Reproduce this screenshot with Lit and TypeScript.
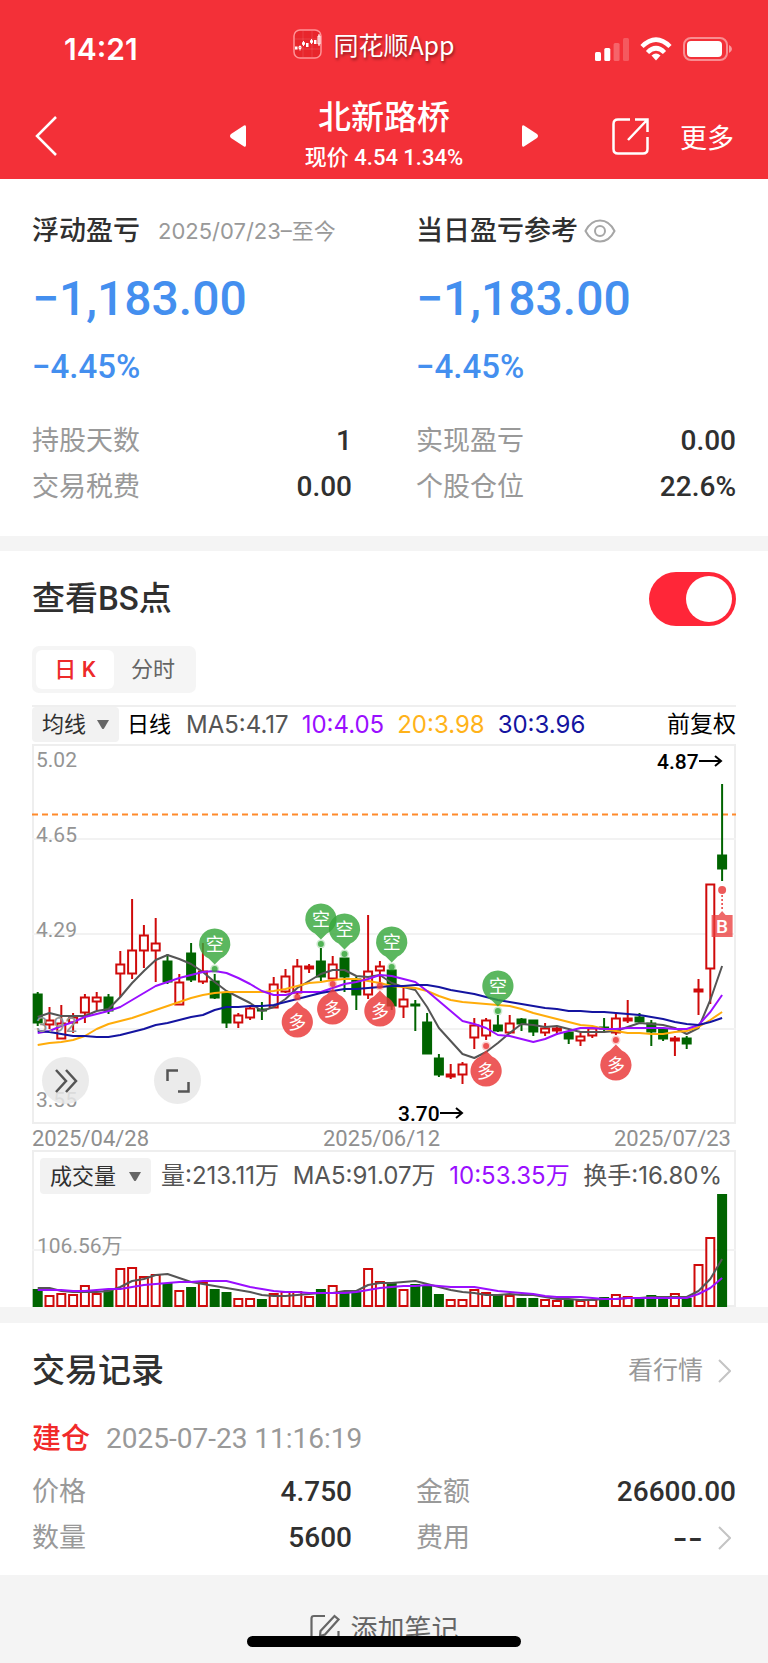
import { LitElement, html, svg, css } from "lit";
import { customElement, property, state } from "lit/decorators.js";

const STEP = 11.8;
const FIRST = 5.7;
const cx = (i: number) => FIRST + STEP * i;
const line = (ys: number[]) => ys.map((y, i) => `${cx(i).toFixed(1)},${y}`).join(" ");

/* direction, high, body top, body bottom, low, volume top */
type Bar = ["r" | "g", number, number, number, number, number];

const BARS: Bar[] = [
  ["g", 248, 250, 279, 282, 139], ["r", 263, 276, 281, 285, 145], ["r", 261, 279, 295, 295, 143],
  ["r", 269, 273, 279, 289, 144], ["r", 250, 253, 269, 279, 135], ["r", 248, 253, 258, 266, 143],
  ["g", 250, 253, 267, 270, 140], ["r", 207, 220, 230, 253, 118], ["r", 155, 206, 230, 235, 117],
  ["r", 181, 191, 207, 224, 126], ["r", 174, 199, 207, 238, 124], ["g", 210, 217, 238, 240, 133],
  ["r", 230, 238, 261, 261, 140], ["g", 199, 209, 236, 238, 137], ["r", 199, 227, 238, 240, 132],
  ["g", 230, 237, 254, 255, 139], ["g", 248, 249, 279, 284, 142], ["r", 269, 271, 279, 284, 148],
  ["r", 262, 264, 274, 276, 148], ["g", 258, 265, 267, 276, 149], ["r", 233, 240, 264, 264, 143],
  ["r", 225, 232, 248, 249, 141], ["r", 215, 222, 249, 251, 141], ["r", 220, 222, 225, 229, 146],
  ["g", 204, 217, 233, 237, 139], ["r", 212, 220, 235, 236, 135], ["g", 214, 214, 233, 248, 141],
  ["g", 233, 235, 251, 266, 141], ["r", 171, 227, 251, 255, 118], ["r", 217, 222, 227, 239, 131],
  ["g", 226, 226, 262, 266, 132], ["r", 243, 255, 263, 274, 139], ["g", 256, 260, 262, 287, 134],
  ["g", 269, 278, 310, 310, 135], ["g", 310, 314, 331, 333, 144], ["r", 320, 330, 333, 335, 149],
  ["r", 318, 320, 331, 340, 149], ["r", 274, 281, 294, 305, 139], ["r", 274, 276, 292, 296, 142],
  ["g", 271, 281, 287, 288, 145], ["r", 271, 279, 289, 290, 145], ["g", 274, 275, 280, 287, 148],
  ["g", 276, 276, 288, 292, 148], ["r", 279, 284, 289, 292, 149], ["r", 282, 284, 287, 291, 150],
  ["g", 288, 288, 295, 300, 149], ["r", 289, 292, 297, 302, 150], ["r", 284, 284, 292, 294, 149],
  ["g", 274, 283, 285, 287, 147], ["r", 269, 274, 289, 291, 144], ["r", 256, 274, 277, 279, 146],
  ["g", 269, 273, 278, 280, 148], ["g", 276, 279, 288, 302, 145], ["g", 285, 285, 295, 297, 148],
  ["r", 292, 294, 297, 312, 143], ["g", 292, 294, 300, 305, 148], ["r", 235, 245, 248, 271, 114],
  ["r", 140, 140, 225, 260, 87], ["g", 40, 111, 125, 137, 44],
];

const MA5 = [273, 269, 272, 272, 272, 267, 265, 253, 239, 227, 216, 211, 215, 220, 228, 238, 247, 253, 259, 267,
  263, 255, 244, 237, 230, 226, 226, 232, 233, 231, 239, 243, 246, 263, 284, 297, 310, 314, 308, 299,
  289, 280, 281, 283, 282, 285, 288, 288, 288, 287, 283, 279, 280, 281, 284, 290, 284, 256, 222];
const MA10 = [289, 287, 282, 278, 273, 270, 267, 263, 256, 249, 242, 238, 234, 231, 228, 227, 229, 234, 240, 247,
  251, 251, 248, 248, 248, 244, 240, 238, 235, 231, 232, 235, 238, 247, 257, 267, 277, 280, 284, 291,
  292, 295, 298, 295, 290, 287, 284, 284, 285, 285, 284, 284, 284, 284, 285, 285, 281, 268, 251];
const MA20 = [301, 299, 298, 296, 292, 285, 280, 277, 274, 270, 266, 262, 258, 254, 251, 249, 248, 248, 248, 248,
  247, 245, 242, 239, 238, 236, 235, 235, 237, 239, 242, 243, 244, 247, 252, 256, 258, 259, 260, 261,
  262, 265, 269, 272, 275, 278, 281, 282, 285, 287, 289, 289, 290, 290, 288, 287, 283, 276, 268];
const MA30 = [287, 288, 290, 292, 292, 293, 293, 291, 288, 285, 281, 279, 276, 273, 271, 266, 263, 263, 262, 262,
  261, 258, 255, 252, 249, 247, 245, 245, 244, 243, 242, 242, 241, 241, 243, 246, 248, 250, 253, 256,
  258, 260, 262, 264, 265, 267, 267, 268, 268, 269, 270, 271, 273, 275, 278, 280, 281, 278, 274];
const VOL5 = [138, 138, 141, 142, 142, 142, 141, 137, 131, 129, 125, 124, 128, 132, 134, 136, 138, 140, 142, 145,
  146, 146, 145, 144, 143, 143, 141, 141, 135, 133, 133, 132, 131, 134, 137, 140, 142, 143, 145, 145,
  144, 145, 145, 147, 149, 149, 150, 150, 149, 149, 148, 148, 147, 147, 147, 147, 141, 129, 109];
const VOL10 = [140, 140, 140, 141, 141, 140, 139, 139, 137, 135, 134, 133, 132, 132, 131, 131, 131, 134, 137, 139,
  141, 142, 142, 143, 143, 143, 143, 142, 140, 138, 137, 136, 136, 135, 136, 137, 137, 137, 139, 141,
  142, 143, 144, 146, 147, 147, 147, 148, 149, 149, 148, 148, 148, 148, 148, 148, 144, 138, 128];

const SHORTS: [number, number][] = [[15, 200], [24, 175], [26, 185], [30, 198], [39, 242]];
const LONGS: [number, number][] = [[22, 278], [25, 265], [29, 267], [38, 327], [49, 321]];

const chartStyles = css`
  :host { display: block; }
  svg { display: block; width: 100%; height: auto; overflow: visible; }
  text { font-family: Roboto, "Noto Sans CJK SC", sans-serif; }
  .grid { stroke: #f2f2f2; stroke-width: 2; }
  .rise { fill: #fff; stroke: #cf0a0a; stroke-width: 2; }
  .fall { fill: #006400; stroke: #006400; stroke-width: 2; }
  .ma { fill: none; stroke-width: 2; stroke-linejoin: round; }
  .ma5 { stroke: #555; }
  .ma10 { stroke: #9a0fff; }
  .ma20 { stroke: #ffac0a; }
  .ma30 { stroke: #1414a0; }
  .scale { fill: #949494; font-size: 21px; }
`;

@customElement("price-chart")
class PriceChart extends LitElement {
  static styles = [chartStyles, css`
    .cost { stroke: #ff8a2b; stroke-width: 2; stroke-dasharray: 6 4; }
    .peak { fill: #000; font-size: 21px; font-weight: 500; }
    .arrow { fill: none; stroke: #000; stroke-width: 2; }
    .short { fill: #37a73c; fill-opacity: 0.82; }
    .long { fill: #ea3a3a; fill-opacity: 0.84; }
    .halo { fill-opacity: 0.25; }
    .tag { fill: #fff; font-size: 18px; text-anchor: middle; }
    .buy { fill: #ea3a3a; fill-opacity: 0.76; }
    .stem { stroke: #ea3a3a; stroke-width: 1.5; stroke-dasharray: 2 2; }
    .mark { fill: #fff; font-size: 19px; font-weight: 500; text-anchor: middle; }
  `];

  private pin(i: number, y: number, kind: "short" | "long") {
    const x = cx(i);
    const d = kind === "short" ? 1 : -1;
    return svg`
      <path class=${kind} d="M${x - 6} ${y + d * 14.4}A15.6 15.6 0 1 ${d > 0 ? 1 : 0} ${x + 6} ${y + d * 14.4}L${x} ${y + d * 20.5}Z"/>
      <circle class="${kind} halo" cx=${x} cy=${y + d * 25} r="4.5"/>
      <circle class=${kind} cx=${x} cy=${y + d * 25} r="3"/>
      <text class="tag" x=${x} y=${y + 7}>${d > 0 ? "空" : "多"}</text>`;
  }

  render() {
    const last = cx(BARS.length - 1);
    return html`<svg viewBox="0 0 704 380" role="img" aria-label="日K线">
      ${[95, 190, 285].map((y) => svg`<line class="grid" x1="0" x2="704" y1=${y} y2=${y}/>`)}
      <line class="cost" x1="0" x2="704" y1="70.5" y2="70.5"/>
      ${BARS.map(([dir, hi, top, bottom, lo], i) => svg`
        <g class=${dir === "r" ? "rise" : "fall"}>
          <line x1=${cx(i)} x2=${cx(i)} y1=${hi} y2=${lo}/>
          <rect x=${cx(i) - 4} y=${top + 0.5} width="8" height=${Math.max(bottom - top - 1, 1)}/>
        </g>`)}
      <polyline class="ma ma5" points=${line(MA5)}/>
      <polyline class="ma ma20" points=${line(MA20)}/>
      <polyline class="ma ma10" points=${line(MA10)}/>
      <polyline class="ma ma30" points=${line(MA30)}/>
      ${[["5.02", 23], ["4.65", 98], ["4.29", 193], ["3.92", 288], ["3.55", 363]].map(
        ([t, y]) => svg`<text class="scale" x="4" y=${y}>${t}</text>`)}
      ${SHORTS.map(([i, y]) => this.pin(i, y, "short"))}
      ${LONGS.map(([i, y]) => this.pin(i, y, "long"))}
      <circle class="long" cx=${last} cy="146" r="4"/>
      <line class="stem" x1=${last} x2=${last} y1="151" y2="165"/>
      <path class="buy" d="M${last - 10.5} 171h7l3.500-4 3.500 4h7v22h-21z"/>
      <text class="mark" x=${last} y="189">B</text>
      <text class="peak" x="625" y="25">4.87</text>
      <path class="arrow" d="M667 17h21M683 12l6 5-6 5"/>
      <text class="peak" x="366" y="377">3.70</text>
      <path class="arrow" d="M408 369h21M424 364l6 5-6 5"/>
    </svg>`;
  }
}

@customElement("volume-chart")
class VolumeChart extends LitElement {
  static styles = chartStyles;

  render() {
    return html`<svg viewBox="0 44 704 113" role="img" aria-label="成交量">
      <line class="grid" x1="0" x2="704" y1="100" y2="100"/>
      ${BARS.map(([dir, , , , , v], i) => svg`
        <rect class=${dir === "r" ? "rise" : "fall"} x=${cx(i) - 4} y=${v + 1} width="8" height=${155 - v}/>`)}
      <polyline class="ma ma5" points=${line(VOL5)}/>
      <polyline class="ma ma10" points=${line(VOL10)}/>
      <text class="scale" x="5" y="103">106.56万</text>
    </svg>`;
  }
}

@customElement("profit-panel")
class ProfitPanel extends LitElement {
  @property() heading = "";
  @property() range = "";
  @property() amount = "";
  @property() rate = "";
  @property({ attribute: false }) rows: [string, string][] = [];

  static styles = css`
    :host { display: block; min-width: 0; }
    .head { display: flex; align-items: center; height: 44px; white-space: nowrap; }
    h2 { margin: 0; font-size: 27px; line-height: 44px; font-weight: 500; color: #303030; }
    .range { margin-left: 18px; font-family: Inter, "Noto Sans CJK SC", sans-serif; font-size: 22px; line-height: 40px; color: #999; }
    .eye { display: flex; margin-left: 6px; padding: 0; border: 0; background: none; }
    .amount { margin: 16px 0 0; font-size: 48px; line-height: 60px; font-weight: 500; color: #448fef; }
    .rate { margin: 14px 0 0; font-size: 33px; line-height: 48px; font-weight: 500; color: #448fef; }
    dl { margin: 27px 0 0; }
    .row { display: flex; justify-content: space-between; line-height: 46px; }
    dt { font-size: 27px; color: #999; }
    dd { margin: 0; font-size: 28px; font-weight: 500; color: #303030; }
  `;

  render() {
    return html`
      <div class="head">
        <h2>${this.heading}</h2>
        ${this.range
          ? html`<span class="range">${this.range}</span>`
          : html`<button class="eye" aria-label="显示或隐藏金额">
              <svg width="32" height="24" viewBox="0 0 32 24" fill="none" stroke="#a6a6a6" stroke-width="2">
                <path d="M1.500 12C5 5 10 1.500 16 1.500S27 5 30.500 12C27 19 22 22.500 16 22.500S5 19 1.500 12z"/>
                <circle cx="16" cy="12" r="5"/>
              </svg>
            </button>`}
      </div>
      <p class="amount">${this.amount}</p>
      <p class="rate">${this.rate}</p>
      <dl>${this.rows.map(([k, v]) => html`<div class="row"><dt>${k}</dt><dd>${v}</dd></div>`)}</dl>
    `;
  }
}

@customElement("app-root")
class AppRoot extends LitElement {
  @state() private showPoints = true;
  @state() private mode = "day";

  static styles = css`
    :host {
      display: block;
      min-height: 100vh;
      background: #f4f4f4;
      color: #303030;
      font-family: Roboto, "Noto Sans CJK SC", sans-serif;
    }
    button, select { font: inherit; color: inherit; border: 0; padding: 0; margin: 0; background: none; cursor: pointer; }
    svg { display: block; }
    a { color: inherit; text-decoration: none; }
    h1, h2, p, dl, dd { margin: 0; }

    header { background: #f33038; color: #fff; padding-bottom: 3px; }
    .status { display: grid; grid-template-columns: 1fr auto 1fr; align-items: center; height: 96px; padding: 0 36px 0 16px; }
    .time { padding: 2px 0 0 48px; font-family: Inter, sans-serif; font-size: 30px; font-weight: 600; }
    .brand { display: flex; align-items: center; gap: 11px; height: 36px; padding-bottom: 8px; font: 25px/36px "Noto Sans CJK SC", sans-serif; text-shadow: 1px 2px 3px rgba(0, 0, 0, 0.45); }
    .signals { display: flex; justify-content: flex-end; align-items: center; gap: 11px; padding-top: 2px; }
    .nav { display: grid; grid-template-columns: 1fr auto 1fr; align-items: center; padding: 0 34px; }
    .stock { display: flex; align-items: center; justify-content: space-between; width: 308px; }
    .name { text-align: center; }
    .name h1 { font-size: 33px; line-height: 44px; font-weight: 500; }
    .name p { font-size: 22px; line-height: 36px; font-weight: 500; }
    .tools { display: flex; justify-content: flex-end; align-items: center; gap: 31px; font-size: 27px; }

    section { background: #fff; padding: 0 32px; }
    .summary { display: grid; grid-template-columns: 1fr 1fr; gap: 64px; padding-top: 30px; padding-bottom: 26px; }

    .points { margin-top: 15px; padding-top: 21px; }
    .between { display: flex; align-items: center; justify-content: space-between; }
    h2 { font-size: 33px; line-height: 44px; font-weight: 500; }
    .switch { appearance: none; flex: none; display: flex; width: 87px; height: 54px; margin: 0; padding: 4px; box-sizing: border-box; border-radius: 27px; background: #ccc; cursor: pointer; }
    .switch::before { content: ""; width: 46px; height: 46px; border-radius: 50%; background: #fff; }
    .switch:checked { background: #ff2638; justify-content: flex-end; }
    .tabs { display: inline-flex; margin-top: 20px; padding: 4px; border-radius: 7px; background: #f5f5f5; font-size: 22px; line-height: 39px; color: #666; vertical-align: top; }
    .tabs button { width: 78px; border-radius: 6px; }
    .tabs .on { background: #fff; color: #ed2a2a; font-weight: 500; }

    .averages { display: flex; align-items: center; margin-top: 12px; padding-bottom: 2px; border-top: 2px solid #efefef; font-size: 22px; line-height: 35px; white-space: nowrap; }
    .pick { display: grid; align-items: center; border-radius: 4px; background: #f2f2f2; }
    .pick select, .pick svg { grid-area: 1 / 1; }
    .pick select { appearance: none; height: 35px; padding: 0 32px 0 10px; font-size: 22px; }
    .pick svg { justify-self: end; margin-right: 10px; pointer-events: none; }
    .period { margin: 0 15px 0 8px; color: #000; }
    .values { display: flex; flex: 1; gap: 13px; font-family: Inter, "Noto Sans CJK SC", sans-serif; font-size: 24px; color: #555; }
    .purple { color: #9a0fff; }
    .amber { color: #ffb31a; }
    .navy { color: #1414a0; }
    .adjust { font-size: 23px; color: #000; }

    .frame { position: relative; box-shadow: inset 0 0 0 2px #eee; }
    .floating { position: absolute; left: 10px; bottom: 20px; display: flex; gap: 65px; }
    .floating button { display: grid; place-items: center; width: 47px; height: 47px; border-radius: 50%; background: rgba(232, 232, 232, 0.85); }
    .dates { display: flex; justify-content: space-between; padding: 4px 5px 0 0; font-size: 22px; line-height: 22px; color: #8f8f8f; }
    .turnover { display: flex; align-items: center; padding: 8px 14px 0 8px; white-space: nowrap; }
    .turnover .pick select { height: 36px; padding-right: 34px; }
    .turnover .values { justify-content: space-between; gap: 0; margin-left: 10px; line-height: 36px; }

    .trades { margin-top: 16px; padding-top: 26px; padding-bottom: 14px; }
    .more { display: flex; align-items: center; gap: 15px; padding-right: 5px; font-size: 25px; line-height: 40px; color: #999; }
    .event { display: flex; align-items: center; gap: 16px; margin: 24px 0 8px; line-height: 44px; }
    .open { font-size: 29px; font-weight: 500; color: #f12a2a; }
    .event time { font-size: 28px; color: #999; }
    .facts { display: grid; grid-template-columns: 1fr 1fr; column-gap: 64px; line-height: 46px; }
    .facts dt { font-size: 27px; color: #999; }
    .facts dd { display: flex; align-items: center; gap: 15px; font-size: 28px; font-weight: 500; }
    .facts .fee { padding-right: 5px; font-family: Inter, sans-serif; font-size: 33px; }

    footer { display: flex; justify-content: center; padding: 35px 0 13px; color: #666; }
    .note { display: flex; align-items: center; gap: 11px; font-size: 27px; line-height: 40px; }
    .home { position: fixed; bottom: 16px; left: 50%; width: 274px; height: 11px; margin-left: -137px; border-radius: 6px; background: #000; }
  `;

  private caret() {
    return html`<svg width="12" height="9" viewBox="0 0 12 9" fill="#666" aria-hidden="true"><path d="M0 0h12L7 8.500q-1 1-2 0z"/></svg>`;
  }

  private chevron() {
    return html`<svg width="13" height="24" viewBox="0 0 13 24" fill="none" stroke="#c4c4c4" stroke-width="2" aria-hidden="true"><path d="M1 1l11 11L1 23"/></svg>`;
  }

  render() {
    return html`
      <header>
        <div class="status">
          <span class="time">14:21</span>
          <span class="brand">
            <svg width="29" height="30" viewBox="0 0 29 30" fill="none" stroke="#fff">
              <rect x="1" y="1" width="27" height="28" rx="6" fill="#e8262c" stroke="#ff9396" stroke-width="1.500"/>
              <path stroke-opacity=".12" d="M2 10h25M2 20h25M10 2v26M19 2v26"/>
              <path fill="#fff" stroke="none" d="M2 17.500h2.500v3H2zM13 14h2.500v4H13zM21 11h2.500v4H21z"/>
              <path d="M7 16.500v5M6 17.500h2v2H6zM10.500 12v5M9.500 13.500h2v2h-2zM18.500 10v5M17.500 11.500h2v2h-2zM26 5v12M25 7h2v8h-2z"/>
            </svg>
            同花顺App
          </span>
          <span class="signals">
            <svg width="34" height="23" viewBox="0 0 34 23" fill="#fff" aria-label="信号">
              <rect y="14" width="6" height="9" rx="1.500"/>
              <rect x="9.300" y="10" width="6" height="13" rx="1.500"/>
              <rect x="18.600" y="5" width="6" height="18" rx="1.500" opacity=".25"/>
              <rect x="28" width="6" height="23" rx="1.500" opacity=".2"/>
            </svg>
            <svg width="32" height="24" viewBox="0 0 32 24" fill="none" stroke="#fff" stroke-width="4.500" aria-label="无线网络">
              <path d="M2 9.500Q16-4.500 30 9.500M7.500 15.500Q16 7 24.500 15.500"/>
              <path d="M11.500 18.500Q16 14.500 20.500 18.500L16 23.500z" fill="#fff" stroke="none"/>
            </svg>
            <svg width="49" height="24" viewBox="0 0 49 24" fill="#fff" aria-label="电量">
              <rect x="1" y="1" width="43" height="22" rx="7" fill="none" stroke="#fff" stroke-opacity=".45" stroke-width="2"/>
              <rect x="4" y="4" width="35" height="16" rx="4"/>
              <path d="M46 8q3 1.500 3 4t-3 4z" opacity=".5"/>
            </svg>
          </span>
        </div>
        <nav class="nav">
          <button aria-label="返回">
            <svg width="24" height="40" viewBox="0 0 24 40" fill="none" stroke="#fff" stroke-width="2.500"><path d="M22 1L3 20l19 19"/></svg>
          </button>
          <div class="stock">
            <button aria-label="上一只">
              <svg width="16" height="22" viewBox="0 0 16 22" fill="#fff"><path d="M14 .5q2-1 2 1.500v18q0 2.500-2 1.500L1 13q-2-2 0-4z"/></svg>
            </button>
            <div class="name">
              <h1>北新路桥</h1>
              <p>现价 4.54 1.34%</p>
            </div>
            <button aria-label="下一只">
              <svg width="16" height="22" viewBox="0 0 16 22" fill="#fff"><path d="M2 .5Q0-.5 0 2v18q0 2.500 2 1.500L15 13q2-2 0-4z"/></svg>
            </button>
          </div>
          <div class="tools">
            <button aria-label="分享">
              <svg width="37" height="37" viewBox="0 0 37 37" fill="none" stroke="#fff" stroke-width="2.500">
                <path d="M18 1.500H6q-4.500 0-4.500 4.500v25q0 4.500 4.500 4.500h25q4.500 0 4.500-4.500V19M23 1.500h12.500V14M35.500 1.500L16 22"/>
              </svg>
            </button>
            <button>更多</button>
          </div>
        </nav>
      </header>

      <section class="summary">
        <profit-panel heading="浮动盈亏" range="2025/07/23–至今" amount="−1,183.00" rate="−4.45%"
          .rows=${[["持股天数", "1"], ["交易税费", "0.00"]]}></profit-panel>
        <profit-panel heading="当日盈亏参考" amount="−1,183.00" rate="−4.45%"
          .rows=${[["实现盈亏", "0.00"], ["个股仓位", "22.6%"]]}></profit-panel>
      </section>

      <section class="points">
        <div class="between">
          <h2><label for="bs">查看BS点</label></h2>
          <input id="bs" class="switch" type="checkbox" role="switch" .checked=${this.showPoints}
            @change=${(e: Event) => (this.showPoints = (e.target as HTMLInputElement).checked)} />
        </div>
        <div class="tabs">
          <button class=${this.mode === "day" ? "on" : ""} @click=${() => (this.mode = "day")}>日 K</button>
          <button class=${this.mode === "time" ? "on" : ""} @click=${() => (this.mode = "time")}>分时</button>
        </div>
        <div class="averages">
          <div class="pick"><select aria-label="主图指标"><option>均线</option></select>${this.caret()}</div>
          <span class="period">日线</span>
          <div class="values">
            <span>MA5:4.17</span><span class="purple">10:4.05</span><span class="amber">20:3.98</span><span class="navy">30:3.96</span>
          </div>
          <span class="adjust">前复权</span>
        </div>
        <div class="frame">
          <price-chart></price-chart>
          <div class="floating">
            <button aria-label="展开">
              <svg width="24" height="24" viewBox="0 0 24 24" fill="none" stroke="#555" stroke-width="2.500"><path d="M2 1l10 11L2 23M12 1l10 11-10 11"/></svg>
            </button>
            <button aria-label="全屏">
              <svg width="24" height="24" viewBox="0 0 24 24" fill="none" stroke="#555" stroke-width="2.500"><path d="M1.500 12V1.500H12M22.500 13v9.500H12"/></svg>
            </button>
          </div>
        </div>
        <div class="dates"><span>2025/04/28</span><span>2025/06/12</span><span>2025/07/23</span></div>
        <div class="frame">
          <div class="turnover">
            <div class="pick"><select aria-label="副图指标"><option>成交量</option></select>${this.caret()}</div>
            <div class="values">
              <span>量:213.11万</span><span>MA5:91.07万</span><span class="purple">10:53.35万</span><span>换手:16.80%</span>
            </div>
          </div>
          <volume-chart></volume-chart>
        </div>
      </section>

      <section class="trades">
        <div class="between">
          <h2>交易记录</h2>
          <a class="more" href="#quote">看行情${this.chevron()}</a>
        </div>
        <div class="event"><span class="open">建仓</span><time>2025-07-23 11:16:19</time></div>
        <dl class="facts">
          <div class="between"><dt>价格</dt><dd>4.750</dd></div>
          <div class="between"><dt>金额</dt><dd>26600.00</dd></div>
          <div class="between"><dt>数量</dt><dd>5600</dd></div>
          <div class="between"><dt>费用</dt><dd class="fee">--${this.chevron()}</dd></div>
        </dl>
      </section>

      <footer>
        <button class="note">
          <svg width="30" height="32" viewBox="0 0 30 32" fill="none" stroke="#666" stroke-width="2.200">
            <path d="M15 2H4Q1.500 2 1.500 4.500v23Q1.500 30 4 30h22q2.500 0 2.500-2.500V17"/>
            <path d="M24.500 2l4 3.500L15 20.500l-5 1.500.5-5z"/>
          </svg>
          添加笔记
        </button>
      </footer>
      <div class="home"></div>
    `;
  }
}
